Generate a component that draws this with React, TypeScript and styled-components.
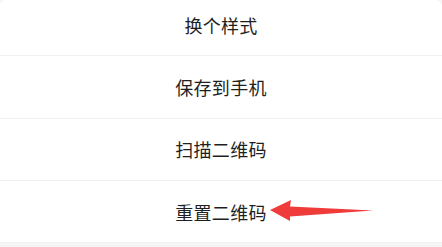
import styled, { createGlobalStyle } from "styled-components";

const GlobalStyle = createGlobalStyle`
  html, body {
    margin: 0;
    padding: 0;
    background: #f5f5f5;
  }
  body {
    font-family: "Noto Sans CJK SC", "Noto Sans", sans-serif;
  }
`;

const Sheet = styled.div`
  background: #ffffff;
  border-radius: 6px 6px 0 0;
  overflow: hidden;
`;

const Row = styled.div<{ $h: number; $lift?: number }>`
  display: flex;
  align-items: center;
  justify-content: center;
  box-sizing: border-box;
  height: ${(p) => p.$h}px;
  padding-bottom: ${(p) => p.$lift ?? 0}px;
  border-bottom: 1px solid #f1f1f1;
  font-size: 18px;
  color: #1f1f1f;
  letter-spacing: 0.3px;
`;

const Label = styled.span`
  position: relative;
  line-height: 1;
`;

const Arrow = styled.svg`
  position: absolute;
  left: 100%;
  top: 50%;
  margin-left: 1px;
  margin-top: -15px;
`;

const items = ["换个样式", "保存到手机", "扫描二维码", "重置二维码"];
const heights = [56, 63, 62, 62];

export default function App() {
  return (
    <>
      <GlobalStyle />
      <Sheet>
        {items.map((text, i) => (
          <Row key={text} $h={heights[i]} $lift={i === 0 ? 5 : i === 2 ? 2 : 0}>
            <Label>
              {text}
              {i === 3 && (
                <Arrow width="110" height="28" viewBox="0 0 110 28">
                  <polygon
                    points="2,13 23,3 22,9.5 105,13.5 22,19.5 22,24"
                    fill="#f03b3b"
                  />
                </Arrow>
              )}
            </Label>
          </Row>
        ))}
      </Sheet>
    </>
  );
}
